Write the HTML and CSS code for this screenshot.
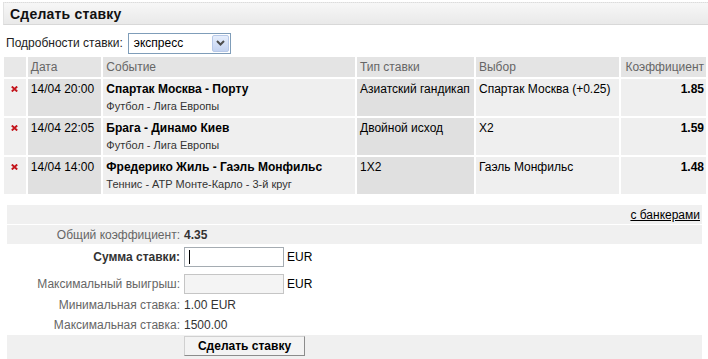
FILE: index.html
```html
<!DOCTYPE html>
<html lang="ru">
<head>
<meta charset="utf-8">
<title>Сделать ставку</title>
<link rel="stylesheet" href="styles.css">
</head>
<body>
<div class="title-bar"><h1 class="title">Сделать ставку</h1></div>
<div class="details">
  <span class="details-label">Подробности ставки:</span>
  <div class="select">
    <span class="select-value">экспресс</span>
    <span class="select-btn"><svg width="9" height="6" viewBox="0 0 9 6"><path d="M1 1 L4.5 4.5 L8 1" fill="none" stroke="#4d4d4d" stroke-width="2"/></svg></span>
  </div>
</div>
<table class="bets">
  <thead>
    <tr>
      <th class="c-x"></th>
      <th class="c-date">Дата</th>
      <th class="c-event">Событие</th>
      <th class="c-type">Тип ставки</th>
      <th class="c-pick">Выбор</th>
      <th class="c-odds">Коэффициент</th>
    </tr>
  </thead>
  <tbody>
    <tr>
      <td class="c-x"><svg class="rm" width="7" height="6" viewBox="0 0 7 6"><path d="M0.8 0.5 L6.2 5.5 M6.2 0.5 L0.8 5.5" stroke="#c4151c" stroke-width="1.9"/></svg></td>
      <td class="c-date dark">14/04 20:00</td>
      <td class="c-event"><div class="ev">Спартак Москва - Порту</div><div class="lg">Футбол - Лига Европы</div></td>
      <td class="c-type dark">Азиатский гандикап</td>
      <td class="c-pick">Спартак Москва (+0.25)</td>
      <td class="c-odds">1.85</td>
    </tr>
    <tr>
      <td class="c-x"><svg class="rm" width="7" height="6" viewBox="0 0 7 6"><path d="M0.8 0.5 L6.2 5.5 M6.2 0.5 L0.8 5.5" stroke="#c4151c" stroke-width="1.9"/></svg></td>
      <td class="c-date dark">14/04 22:05</td>
      <td class="c-event"><div class="ev">Брага - Динамо Киев</div><div class="lg">Футбол - Лига Европы</div></td>
      <td class="c-type dark">Двойной исход</td>
      <td class="c-pick">X2</td>
      <td class="c-odds">1.59</td>
    </tr>
    <tr>
      <td class="c-x"><svg class="rm" width="7" height="6" viewBox="0 0 7 6"><path d="M0.8 0.5 L6.2 5.5 M6.2 0.5 L0.8 5.5" stroke="#c4151c" stroke-width="1.9"/></svg></td>
      <td class="c-date dark">14/04 14:00</td>
      <td class="c-event"><div class="ev">Фредерико Жиль - Гаэль Монфильс</div><div class="lg">Теннис - ATP Монте-Карло - 3-й круг</div></td>
      <td class="c-type dark">1X2</td>
      <td class="c-pick">Гаэль Монфильс</td>
      <td class="c-odds">1.48</td>
    </tr>
  </tbody>
</table>
<div class="summary">
  <div class="banker-row"><a class="banker" href="#">с банкерами</a></div>
  <div class="srow total-row"><span class="lbl">Общий коэффициент:</span><span class="val bold">4.35</span></div>
  <div class="srow input-row first"><span class="lbl strong">Сумма ставки:</span><span class="val"><span class="field focus"><input class="inp" type="text"></span><span class="cur">EUR</span></span></div>
  <div class="srow input-row"><span class="lbl">Максимальный выигрыш:</span><span class="val"><span class="field"><input class="inp disabled" type="text" disabled></span><span class="cur">EUR</span></span></div>
  <div class="srow info-row"><span class="lbl">Минимальная ставка:</span><span class="val">1.00 EUR</span></div>
  <div class="srow info-row"><span class="lbl">Максимальная ставка:</span><span class="val">1500.00</span></div>
  <div class="srow button-row"><span class="lbl"></span><span class="val"><button class="submit" type="button">Сделать ставку</button></span></div>
</div>
</body>
</html>
```
FILE: styles.css
```css
* { box-sizing: border-box; }
body {
  margin: 0;
  font-family: "Liberation Sans", Arial, sans-serif;
  font-size: 12px;
  color: #000;
  background: #fff;
}
.title-bar {
  margin: 2px 0 0 3px;
  height: 23px;
  border-top: 1px dotted #dcdcdc;
  border-left: 1px solid #e2e2e2;
  border-bottom: 1px solid #d8d8d8;
  background: linear-gradient(#f7f7f7, #e9e9e9);
  display: flex;
  align-items: center;
  padding-left: 6px;
}
.title {
  margin: 0;
  font-size: 14px;
  font-weight: bold;
  color: #111;
  letter-spacing: 0.2px;
}
.details {
  display: flex;
  align-items: center;
  height: 22px;
  margin-top: 7px;
  padding-left: 6px;
}
.details-label {
  color: #222;
  margin-right: 5px;
}
.select {
  width: 103px;
  height: 21px;
  border: 1px solid #7f9db9;
  background: #fff;
  display: flex;
  align-items: center;
  justify-content: space-between;
  padding: 0 1px 0 5px;
}
.select-value { color: #000; }
.select-btn {
  width: 17px;
  height: 17px;
  border: 1px solid #b8c9e8;
  border-radius: 2px;
  background: linear-gradient(#e6eefc, #c4d3f1);
  display: flex;
  align-items: center;
  justify-content: center;
}
.bets {
  border-collapse: separate;
  border-spacing: 2px;
  margin: 1px 0 0 2px;
}
.bets th, .bets td {
  padding: 0 3px;
  text-align: left;
  vertical-align: top;
  background: #efefef;
}
.bets th {
  height: 20px;
  font-weight: normal;
  color: #666;
  background: #e4e4e4;
  vertical-align: middle;
  line-height: 14px;
}
.bets th.c-x { background: #e8e8e8; }
.bets td {
  height: 37px;
  padding-top: 3px;
  line-height: 14px;
}
.bets td.dark { background: #e0e0e0; }
.c-x { width: 22px; }
.bets td.c-x { text-align: center; padding: 7px 0 0 0; line-height: 0; }
.c-date { width: 74px; }
.c-event { width: 254px; }
.c-type { width: 117px; padding-right: 0 !important; white-space: nowrap; }
.c-pick { width: 144px; }
.bets .c-odds { width: 85px; text-align: right; padding-right: 2px; }
.bets td.c-odds { font-weight: bold; }
.ev { font-weight: bold; }
.lg { font-size: 11px; color: #333; margin-top: 3px; }
.summary {
  margin: 9px 6px 0 7px;
}
.banker-row {
  height: 19px;
  background: #f0f0f0;
  text-align: right;
  padding: 3px 2px 0 0;
}
.banker { color: #000; text-decoration: underline; }
.srow {
  display: grid;
  grid-template-columns: 173px 1fr;
  column-gap: 4px;
  align-items: center;
}
.lbl { text-align: right; color: #666; }
.lbl.strong { font-weight: bold; color: #333; }
.val { color: #333; display: flex; align-items: center; }
.bold { font-weight: bold; }
.total-row { height: 19px; margin-top: 1px; background: #f0f0f0; }
.input-row { height: 20px; margin-top: 7px; }
.input-row.first { margin-top: 3px; }
.info-row { height: 20px; }
.input-row + .info-row { margin-top: 1px; }
.button-row { height: 26px; background: #f0f0f0; align-items: start; padding-top: 1px; }
.field { position: relative; display: inline-block; }
.inp {
  width: 100px;
  height: 20px;
  border: 1px solid #a5acb2;
  background: #fff;
  margin: 0;
  padding: 0 3px;
  font: inherit;
  display: block;
}
.inp.disabled { background: #f4f4f4; border-color: #c5c5c5; }
.field.focus::after {
  content: "";
  position: absolute;
  left: 5px;
  top: 3px;
  width: 1px;
  height: 14px;
  background: #000;
}
.cur { margin-left: 3px; color: #000; }
.submit {
  width: 121px;
  height: 20px;
  font: bold 12px "Liberation Sans", Arial, sans-serif;
  color: #000;
  background: #f3f3f3;
  border: 1px solid;
  border-color: #d0d0d0 #8c8c8c #8c8c8c #d0d0d0;
  padding: 0;
}
```
